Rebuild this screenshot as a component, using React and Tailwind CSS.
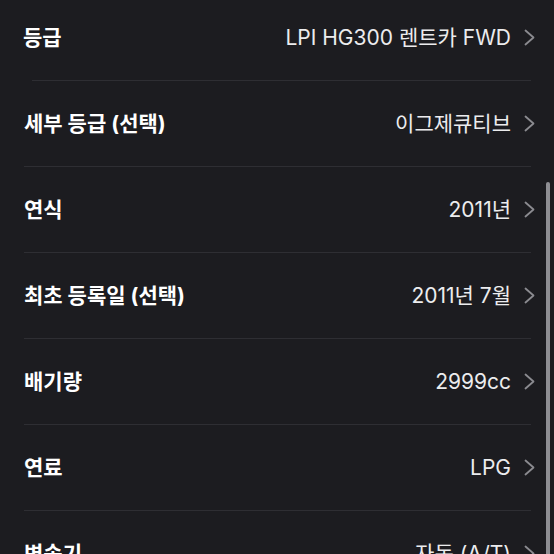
const rows = [
  { label: '등급', value: 'LPI HG300 렌트카 FWD' },
  { label: '세부 등급 (선택)', value: '이그제큐티브' },
  { label: '연식', value: '2011년' },
  { label: '최초 등록일 (선택)', value: '2011년 7월' },
  { label: '배기량', value: '2999cc' },
  { label: '연료', value: 'LPG' },
  { label: '변속기', value: '자동 (A/T)' },
];

const Chevron = () => (
  <svg className="h-[17px] w-[11px] shrink-0" viewBox="0 0 11 17" fill="none" stroke="#8b8b90" strokeWidth={1.8} strokeLinecap="round" strokeLinejoin="round">
    <path d="M1.5 1.5l8 7-8 7" />
  </svg>
);

export default function App() {
  return (
    <div
      className="relative h-[554px] w-[554px] overflow-hidden bg-[#1c1c20] text-white"
      style={{ fontFamily: 'Inter, "Noto Sans CJK KR", "Noto Sans", sans-serif' }}
    >
      <div className="mt-[-5px]">
        {rows.map((row, i) => (
          <div key={row.label} className={i === 0 ? 'pl-[32px] pr-[23px]' : 'pl-[24px] pr-[23px]'}>
            <div className="flex h-[86px] items-center justify-between border-b border-[#2e2e33]">
              <span className={`text-[21px] font-bold leading-none text-white ${i === 0 ? 'ml-[-9px]' : ''}`}>{row.label}</span>
              <div className="flex items-center gap-[13px]">
                <span className="text-[21px] leading-none text-[#ececee]">{row.value}</span>
                <div className="mr-[-4px]"><Chevron /></div>
              </div>
            </div>
          </div>
        ))}
      </div>
      <div className="absolute right-[4px] top-[182px] h-[380px] w-[4px] rounded-full bg-[#8e8e93]" />
    </div>
  );
}
